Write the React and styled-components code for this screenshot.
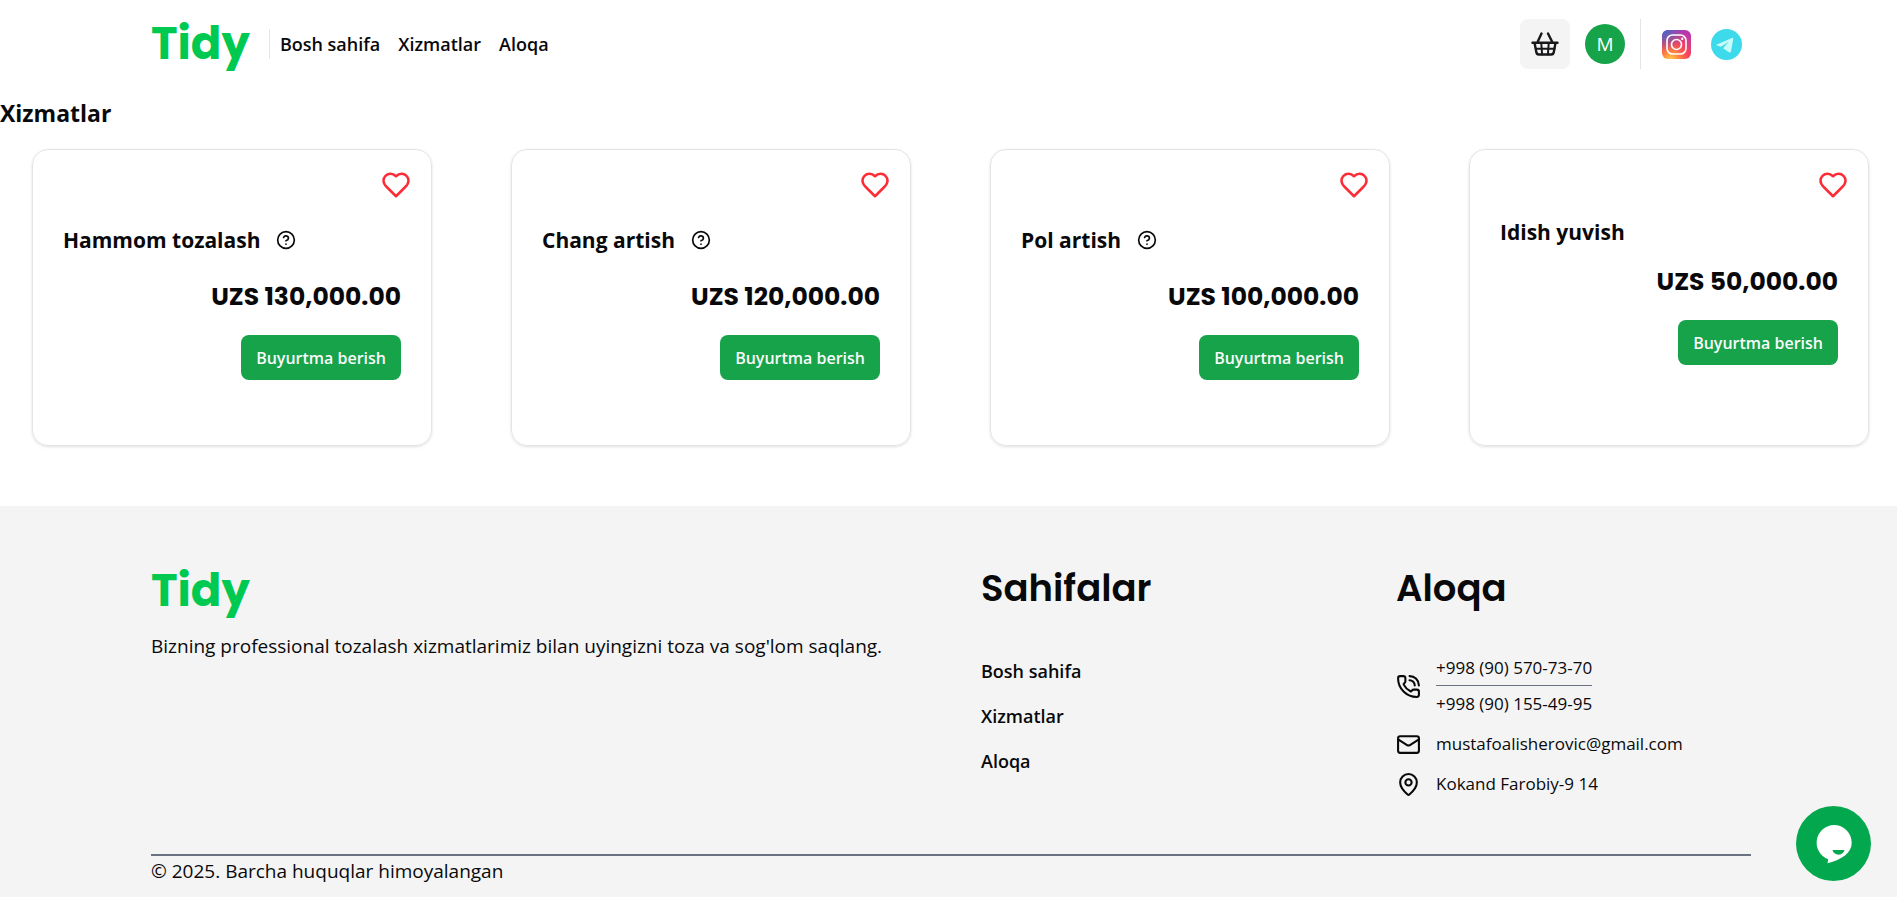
import React from "react";
import styled, { createGlobalStyle, css } from "styled-components";
import { CircleHelp, Mail, MapPin, PhoneCall } from "lucide-react";

const GlobalStyle = createGlobalStyle`
  *, *::before, *::after { box-sizing: border-box; }
  html, body, #root { min-height: 100vh; }
  body {
    margin: 0;
    background: #fff;
    color: #09090b;
    font-family: "Segoe UI", "Open Sans", "Noto Sans", sans-serif;
    font-size: 19px;
    line-height: 30px;
  }
  h1, h2, h3, p, ul { margin: 0; padding: 0; }
  ul { list-style: none; }
  a { color: inherit; text-decoration: none; }
  button { font: inherit; border: 0; padding: 0; cursor: pointer; }
  svg { display: block; flex: none; }
`;

const display = css`
  font-family: Poppins, Inter, sans-serif;
`;

const Page = styled.div`
  min-height: 100vh;
  display: flex;
  flex-direction: column;
`;

const Container = styled.div`
  max-width: 1600px;
  margin: 0 auto;
`;

const Header = styled.header`
  padding: 19px 0 19px 5px;
`;

const HeaderRow = styled(Container)`
  display: flex;
  align-items: center;
  justify-content: space-between;
`;

const Group = styled.div`
  display: flex;
  align-items: center;
  gap: ${(p) => p.$gap}px;
`;

const Logo = styled.a`
  ${display}
  color: #00c951;
  font-size: 45px;
  line-height: 50px;
  font-weight: 700;
`;

const Divider = styled.span`
  width: 1px;
  height: ${(p) => p.$height}px;
  background: #e4e4e7;
`;

const HeaderNav = styled.nav`
  display: flex;
  gap: 18px;
  font-size: 18px;
  font-weight: 600;
`;

const CartButton = styled.button`
  display: grid;
  place-items: center;
  width: 50px;
  height: 50px;
  border-radius: 8px;
  background: #f4f4f5;
  color: #18181b;
`;

const Avatar = styled.button`
  width: 40px;
  height: 40px;
  border-radius: 50%;
  background: #16a34a;
  color: #fff;
`;

const SocialLink = styled.a`
  display: grid;
  place-items: center;
  width: 50px;
  height: 50px;
`;

const Main = styled.main`
  padding-bottom: 60px;
`;

const PageTitle = styled.h1`
  font-size: 23px;
  line-height: 50px;
  font-weight: 700;
`;

const CardList = styled.ul`
  display: flex;
  flex-wrap: wrap;
  justify-content: space-between;
  gap: 30px;
  padding: 11px 28px 0 32px;
`;

const Card = styled.li`
  display: flex;
  flex-direction: column;
  width: 400px;
  min-height: 297px;
  padding: 20px 30px;
  border: 1px solid #e4e4e7;
  border-radius: 16px;
  box-shadow: 0 1px 3px rgba(0, 0, 0, 0.12);
`;

const LikeButton = styled.button`
  align-self: flex-end;
  margin-right: -10px;
  margin-bottom: 16px;
  background: none;
  color: #fb2c36;
`;

const TitleRow = styled.div`
  display: flex;
  align-items: center;
  gap: 16px;
  min-height: ${(p) => (p.$tall ? 47 : 32)}px;
`;

const CardTitle = styled.h2`
  font-size: 21px;
  line-height: 32px;
  font-weight: 700;
`;

const HelpButton = styled.button`
  background: none;
  color: inherit;
`;

const Price = styled.p`
  ${display}
  margin-top: 16px;
  text-align: right;
  font-size: 25px;
  line-height: 36px;
  font-weight: 700;
`;

const OrderButton = styled.button`
  align-self: flex-end;
  height: 45px;
  margin-top: 20px;
  padding: 0 15px;
  border-radius: 8px;
  background: #16a34a;
  color: #fafafa;
  font-size: 16px;
  font-weight: 600;
`;

const Footer = styled.footer`
  flex: 1;
  padding: 60px 0 0 5px;
  background: #f4f4f4;
`;

const FooterGrid = styled.div`
  display: grid;
  grid-template-columns: repeat(4, 1fr);
  gap: 60px;
  padding-bottom: 56px;
`;

const FooterColumn = styled.section`
  grid-column: span ${(p) => p.$span || 1};
`;

const FooterText = styled.p`
  margin-top: 15px;
`;

const FooterTitle = styled.h2`
  ${display}
  font-size: 37px;
  line-height: 44px;
  font-weight: 600;
`;

const FooterLinks = styled.ul`
  display: grid;
  gap: 15px;
  margin-top: 46px;
  font-size: 18px;
  font-weight: 600;
`;

const Contacts = styled.address`
  display: grid;
  gap: 12px;
  margin-top: 44px;
  font-style: normal;
  font-size: 17px;
  line-height: 28px;
`;

const ContactRow = styled.div`
  display: flex;
  align-items: center;
  gap: 15px;
`;

const Phones = styled.div`
  display: grid;
`;

const PhoneLink = styled.a`
  padding-bottom: 3px;
  & + & {
    padding: 4px 0 0;
    border-top: 1px solid #6a7282;
  }
`;

const Copyright = styled.p`
  border-top: 2px solid #6a7282;
`;

const ChatButton = styled.button`
  position: fixed;
  right: 26px;
  bottom: 16px;
  width: 75px;
  height: 75px;
  border-radius: 50%;
  background: #03a84e;
`;

const HeartIcon = () => (
  <svg width="30" height="30" viewBox="0 0 24 24" fill="none" stroke="currentColor" strokeWidth="2" strokeLinecap="round" strokeLinejoin="round">
    <path d="M19 14c1.49-1.46 3-3.21 3-5.5A5.5 5.5 0 0 0 16.5 3c-1.76 0-3 .5-4.5 2-1.5-1.5-2.74-2-4.5-2A5.5 5.5 0 0 0 2 8.5c0 2.3 1.5 4.05 3 5.5l7 7Z" />
  </svg>
);

const BasketIcon = () => (
  <svg width="28" height="24" viewBox="0 0 28 24" fill="none" stroke="currentColor" strokeWidth="2.4" strokeLinecap="round" strokeLinejoin="round">
    <path d="M1.500 10.700h25M6.800 9.500 10.500 1.500M21 9.500 17 1.500M3.600 11l1.700 9q.4 2.500 2.500 2.500h12.500q2.100 0 2.500-2.500l1.700-9" />
    <path d="M5 16.700h18.500M10.300 11.500l.8 11M17.700 11.500l-.8 11" strokeWidth="2" />
  </svg>
);

const InstagramIcon = () => (
  <svg width="29" height="29" viewBox="0 0 29 29">
    <defs>
      <radialGradient id="igWarm" cx="0.3" cy="1.05" r="1.1">
        <stop offset="0" stopColor="#ffd54f" />
        <stop offset="0.25" stopColor="#ff8a3d" />
        <stop offset="0.55" stopColor="#fb4458" />
        <stop offset="1" stopColor="#b836b0" />
      </radialGradient>
      <radialGradient id="igCool" cx="0.05" cy="0" r="0.75">
        <stop offset="0" stopColor="#4168c9" />
        <stop offset="1" stopColor="#4168c9" stopOpacity="0" />
      </radialGradient>
    </defs>
    <rect width="29" height="29" rx="6" fill="url(#igWarm)" />
    <rect width="29" height="29" rx="6" fill="url(#igCool)" />
    <g fill="none" stroke="#fff" strokeWidth="1.600">
      <rect x="5" y="5" width="19" height="19" rx="5.500" />
      <circle cx="14.500" cy="14.500" r="5" />
    </g>
    <circle cx="20.200" cy="8.800" r="1.200" fill="#fff" />
  </svg>
);

const TelegramIcon = () => (
  <svg width="31" height="31" viewBox="0 0 31 31">
    <circle cx="15.500" cy="15.500" r="15.500" fill="#3ddaeb" />
    <path d="M4.800 16 21 8.900q1.400-.4 1.200 1.200l-2.200 12.300q-.4 1.700-2 .8L12 19.200l6-6.700-8 5.200Z" fill="#c8fcfc" />
  </svg>
);

const ChatIcon = () => (
  <svg width="75" height="75" viewBox="0 0 75 75">
    <path d="M38 19a17.700 17.700 0 0 1 17.700 17.700c0 10.500-9.700 16.500-24.200 20.600l.7-4A17.700 17.700 0 0 1 38 19Z" fill="#fff" />
    <path d="M36.500 44h12c-.5 2.700-2.800 4.700-5.800 4.700S37 46.700 36.500 44Z" fill="#03a84e" />
  </svg>
);

const pages = ["Bosh sahifa", "Xizmatlar", "Aloqa"];

const services = [
  { name: "Hammom tozalash", price: "UZS 130,000.00", help: true },
  { name: "Chang artish", price: "UZS 120,000.00", help: true },
  { name: "Pol artish", price: "UZS 100,000.00", help: true },
  { name: "Idish yuvish", price: "UZS 50,000.00", help: false },
];

export default function App() {
  return (
    <Page>
      <GlobalStyle />
      <Header>
        <HeaderRow>
          <Group $gap={19}>
            <Logo href="#">Tidy</Logo>
            <Group $gap={10}>
              <Divider $height={30} />
              <HeaderNav>
                {pages.map((page) => <a href="#" key={page}>{page}</a>)}
              </HeaderNav>
            </Group>
          </Group>
          <Group $gap={10}>
            <Group $gap={15}>
              <CartButton aria-label="Savat"><BasketIcon /></CartButton>
              <Avatar aria-label="Profil">M</Avatar>
              <Divider $height={50} />
            </Group>
            <Group $gap={0}>
              <SocialLink href="#" aria-label="Instagram"><InstagramIcon /></SocialLink>
              <SocialLink href="#" aria-label="Telegram"><TelegramIcon /></SocialLink>
            </Group>
          </Group>
        </HeaderRow>
      </Header>

      <Main>
        <PageTitle>Xizmatlar</PageTitle>
        <CardList>
          {services.map((service) => (
            <Card key={service.name}>
              <LikeButton aria-label="Sevimli"><HeartIcon /></LikeButton>
              <TitleRow $tall={service.help}>
                <CardTitle>{service.name}</CardTitle>
                {service.help && (
                  <HelpButton aria-label="Ma'lumot"><CircleHelp size={20} /></HelpButton>
                )}
              </TitleRow>
              <Price>{service.price}</Price>
              <OrderButton>Buyurtma berish</OrderButton>
            </Card>
          ))}
        </CardList>
      </Main>

      <Footer>
        <Container>
          <FooterGrid>
            <FooterColumn $span={2}>
              <Logo href="#">Tidy</Logo>
              <FooterText>Bizning professional tozalash xizmatlarimiz bilan uyingizni toza va sog'lom saqlang.</FooterText>
            </FooterColumn>
            <FooterColumn>
              <FooterTitle>Sahifalar</FooterTitle>
              <FooterLinks>
                {pages.map((page) => <li key={page}><a href="#">{page}</a></li>)}
              </FooterLinks>
            </FooterColumn>
            <FooterColumn>
              <FooterTitle>Aloqa</FooterTitle>
              <Contacts>
                <ContactRow>
                  <PhoneCall size={25} />
                  <Phones>
                    <PhoneLink href="tel:+998905707370">+998 (90) 570-73-70</PhoneLink>
                    <PhoneLink href="tel:+998901554995">+998 (90) 155-49-95</PhoneLink>
                  </Phones>
                </ContactRow>
                <ContactRow>
                  <Mail size={25} />
                  <a href="mailto:mustafoalisherovic@gmail.com">mustafoalisherovic@gmail.com</a>
                </ContactRow>
                <ContactRow>
                  <MapPin size={25} />
                  <span>Kokand Farobiy-9 14</span>
                </ContactRow>
              </Contacts>
            </FooterColumn>
          </FooterGrid>
          <Copyright>© 2025. Barcha huquqlar himoyalangan</Copyright>
        </Container>
      </Footer>
      <ChatButton aria-label="Chat"><ChatIcon /></ChatButton>
    </Page>
  );
}
